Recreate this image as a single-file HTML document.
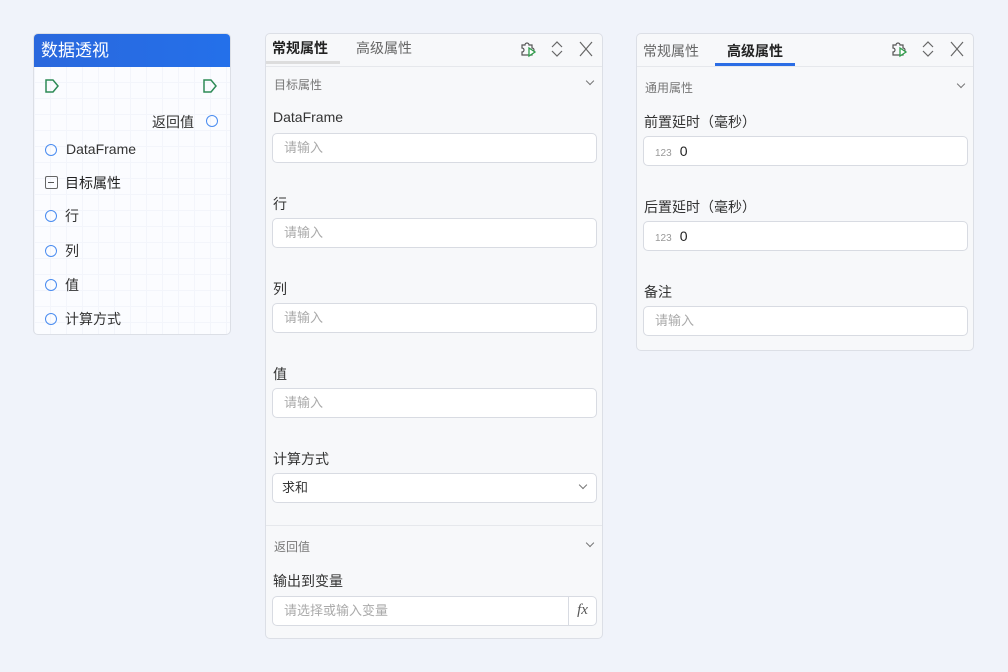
<!DOCTYPE html>
<html><head><meta charset="utf-8"><style>
*{box-sizing:border-box;margin:0;padding:0}
body{width:1008px;height:672px;background:#f0f3fa;font-family:"Liberation Sans","Noto Sans CJK SC",sans-serif;position:relative;overflow:hidden;color:#333}
.abs{position:absolute}
.node{left:33px;top:33px;width:198px;height:302px;border:1px solid #dcdfe6;border-radius:5px;background-color:#fbfcff;background-image:linear-gradient(#f3f5fb 1px,transparent 1px),linear-gradient(90deg,#f3f5fb 1px,transparent 1px);background-size:16px 16px;overflow:hidden}
.nh{height:33px;background:linear-gradient(90deg,#2a68dd,#2470ea);color:#fff;font-size:17px;line-height:33px;padding-left:7px}
.nt{position:absolute;font-size:14px;color:#333}
.circ{position:absolute;width:12px;height:12px;border:1.3px solid #4a8cf0;border-radius:50%}
.panel{background:#f7f8fa;border:1px solid #dcdfe6;border-radius:5px}
.tabs{height:33px;border-bottom:1px solid #e6e8ec;position:relative}
.tab{position:absolute;top:7px;font-size:14px}
.sec{position:absolute;left:8px;font-size:12px;color:#777}
.chev{position:absolute;right:9px;width:6px;height:6px;border-right:1.3px solid #777;border-bottom:1.3px solid #777;transform:rotate(45deg)}
.lbl{position:absolute;left:7px;font-size:14px;color:#333}
.inp{position:absolute;left:6px;right:5px;height:30px;background:#fff;border:1px solid #d8dbe2;border-radius:5px;font-size:13px;color:#aaa;line-height:28px;padding-left:11px}
.icons{position:absolute;right:6px;top:5px;display:flex;gap:9px}
</style></head><body>

<div class="abs node">
 <div class="nh">数据透视</div>
 <svg class="abs" style="left:10px;top:44px" width="16" height="16"><path d="M2 2h7l5 6-5 6H2z" fill="none" stroke="#2e8b57" stroke-width="1.5"/></svg>
 <svg class="abs" style="left:168px;top:44px" width="16" height="16"><path d="M2 2h7l5 6-5 6H2z" fill="none" stroke="#2e8b57" stroke-width="1.5"/></svg>
 <div class="nt" style="left:118px;top:78px">返回值</div><div class="circ" style="left:172px;top:81px"></div>
 <div class="circ" style="left:11px;top:110px"></div><div class="nt" style="left:32px;top:107px">DataFrame</div>
 <div class="abs" style="left:11px;top:142px;width:13px;height:13px;border:1.5px solid #666;border-radius:2px"><div class="abs" style="left:2px;top:4.5px;width:6px;height:1.5px;background:#555"></div></div>
 <div class="nt" style="left:31px;top:139px;color:#222">目标属性</div>
 <div class="circ" style="left:11px;top:176px"></div><div class="nt" style="left:31px;top:172px">行</div>
 <div class="circ" style="left:11px;top:211px"></div><div class="nt" style="left:31px;top:207px">列</div>
 <div class="circ" style="left:11px;top:245px"></div><div class="nt" style="left:31px;top:241px">值</div>
 <div class="circ" style="left:11px;top:279px"></div><div class="nt" style="left:31px;top:275px">计算方式</div>
</div>

<div class="abs panel" style="left:265px;top:33px;width:338px;height:606px">
 <div class="tabs">
  <div class="tab" style="left:6px;top:4px;font-weight:bold;color:#222">常规属性</div>
  <div class="tab" style="left:90px;top:4px;color:#666">高级属性</div>
  <div class="abs" style="left:0;top:27px;width:74px;height:3px;background:#ddd"></div>
  <div class="icons">
   <svg width="20" height="20"><path d="M4 6h3a2 2 0 0 1 4 0h3v3a2 2 0 0 1 0 4v3H4v-3a2 2 0 0 0 0-4z" fill="none" stroke="#555" stroke-width="1.2"/><path d="M11 9l6 4-6 4z" fill="#fff" stroke="#2e9d4a" stroke-width="1.3"/></svg>
   <svg width="20" height="20"><path d="M5 8l5-5 5 5M5 12l5 5 5-5" fill="none" stroke="#666" stroke-width="1.2"/></svg>
   <svg width="20" height="20"><path d="M4 3l6 7 6-7M4 17l6-7 6 7" fill="none" stroke="#666" stroke-width="1.2"/></svg>
  </div>
 </div>
 <div class="sec" style="top:42px">目标属性</div><div class="chev" style="top:44px"></div>
 <div class="lbl" style="top:75px">DataFrame</div><div class="inp" style="top:99px">请输入</div>
 <div class="lbl" style="top:160px">行</div><div class="inp" style="top:184px">请输入</div>
 <div class="lbl" style="top:245px">列</div><div class="inp" style="top:269px">请输入</div>
 <div class="lbl" style="top:330px">值</div><div class="inp" style="top:354px">请输入</div>
 <div class="lbl" style="top:415px">计算方式</div><div class="inp" style="top:439px;color:#333;padding-left:9px">求和<div class="chev" style="right:10px;top:8px;width:6px;height:6px;border-color:#777;border-width:1.2px"></div></div>
 <div class="abs" style="left:0;right:0;top:491px;height:1px;background:#e6e8ec"></div>
 <div class="sec" style="top:504px">返回值</div><div class="chev" style="top:506px"></div>
 <div class="lbl" style="top:537px">输出到变量</div>
 <div class="inp" style="top:562px">请选择或输入变量<div class="abs" style="right:0;top:0;width:28px;height:28px;border-left:1px solid #d8dbe2;color:#555;font-style:italic;font-family:'Liberation Serif',serif;font-size:15px;text-align:center;line-height:27px">fx</div></div>
</div>

<div class="abs panel" style="left:636px;top:33px;width:338px;height:318px">
 <div class="tabs">
  <div class="tab" style="left:6px;color:#666">常规属性</div>
  <div class="tab" style="left:90px;font-weight:bold;color:#222">高级属性</div>
  <div class="abs" style="left:78px;top:29px;width:80px;height:3px;background:#2b6de5"></div>
  <div class="icons">
   <svg width="20" height="20"><path d="M4 6h3a2 2 0 0 1 4 0h3v3a2 2 0 0 1 0 4v3H4v-3a2 2 0 0 0 0-4z" fill="none" stroke="#555" stroke-width="1.2"/><path d="M11 9l6 4-6 4z" fill="#fff" stroke="#2e9d4a" stroke-width="1.3"/></svg>
   <svg width="20" height="20"><path d="M5 8l5-5 5 5M5 12l5 5 5-5" fill="none" stroke="#666" stroke-width="1.2"/></svg>
   <svg width="20" height="20"><path d="M4 3l6 7 6-7M4 17l6-7 6 7" fill="none" stroke="#666" stroke-width="1.2"/></svg>
  </div>
 </div>
 <div class="sec" style="top:45px">通用属性</div><div class="chev" style="top:47px"></div>
 <div class="lbl" style="top:78px">前置延时（毫秒）</div><div class="inp" style="top:102px;color:#222;font-size:14px"><span style="font-size:10px;color:#999;margin-right:8px">123</span>0</div>
 <div class="lbl" style="top:163px">后置延时（毫秒）</div><div class="inp" style="top:187px;color:#222;font-size:14px"><span style="font-size:10px;color:#999;margin-right:8px">123</span>0</div>
 <div class="lbl" style="top:248px">备注</div><div class="inp" style="top:272px">请输入</div>
</div>
</body></html>
